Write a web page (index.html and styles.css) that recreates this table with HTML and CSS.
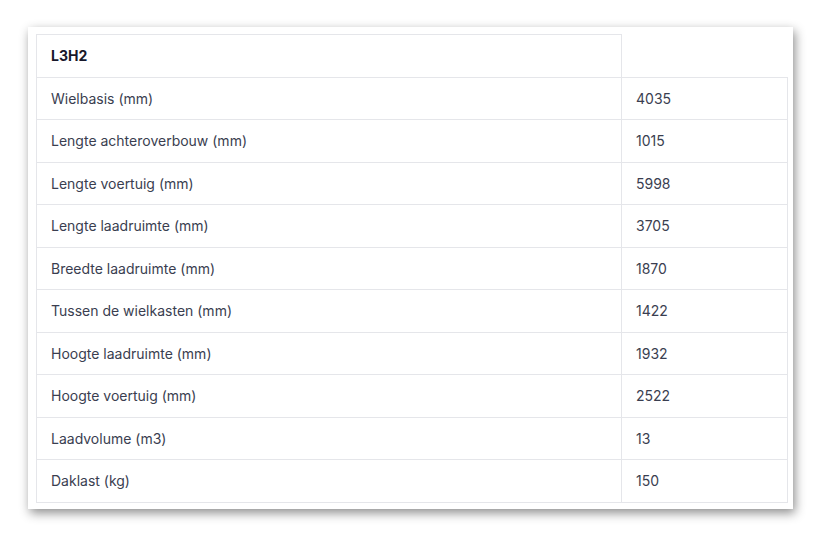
FILE: index.html
```
<!DOCTYPE html>
<html lang="nl">
<head>
<meta charset="utf-8">
<title>L3H2</title>
<link rel="stylesheet" href="styles.css">
</head>
<body>
<div class="card">
  <table class="specs">
    <thead>
      <tr><th>L3H2</th></tr>
    </thead>
    <tbody>
      <tr><td>Wielbasis (mm)</td><td>4035</td></tr>
      <tr><td>Lengte achteroverbouw (mm)</td><td>1015</td></tr>
      <tr><td>Lengte voertuig (mm)</td><td>5998</td></tr>
      <tr><td>Lengte laadruimte (mm)</td><td>3705</td></tr>
      <tr><td>Breedte laadruimte (mm)</td><td>1870</td></tr>
      <tr><td>Tussen de wielkasten (mm)</td><td>1422</td></tr>
      <tr><td>Hoogte laadruimte (mm)</td><td>1932</td></tr>
      <tr><td>Hoogte voertuig (mm)</td><td>2522</td></tr>
      <tr><td>Laadvolume (m3)</td><td>13</td></tr>
      <tr><td>Daklast (kg)</td><td>150</td></tr>
    </tbody>
  </table>
</div>
</body>
</html>
```
FILE: styles.css
```
html, body {
  margin: 0;
  background: #ffffff;
}
body {
  padding: 27px 29px 28px 28px;
  font-family: Inter, "Noto Sans", sans-serif;
}
.card {
  background: #ffffff;
  padding: 7px 6px 6px 8px;
  box-shadow: 2px 4px 10px rgba(0, 0, 0, 0.45);
}
.specs {
  width: 752px;
  border-collapse: collapse;
  font-size: 14px;
  line-height: 20.5px;
  color: #3a3e50;
}
.specs th,
.specs td {
  border: 1px solid #e5e6ea;
  padding: 11px 14px 10px;
  text-align: left;
}
.specs th {
  font-weight: 700;
  color: #17182b;
}
.specs td:first-child,
.specs th:first-child {
  width: 556px;
}
```
